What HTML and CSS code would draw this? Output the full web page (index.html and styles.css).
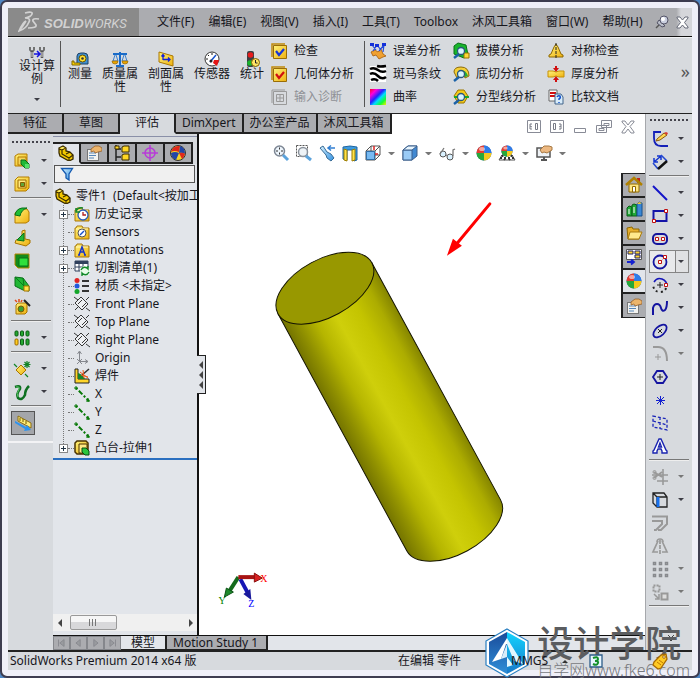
FILE: index.html
```html
<!DOCTYPE html>
<html lang="zh-CN">
<head>
<meta charset="utf-8">
<meta name="viewport" content="width=device-width, initial-scale=1">
<title>SolidWorks Premium 2014</title>
<link rel="stylesheet" href="styles.css">
</head>
<body>
<svg class="defs" aria-hidden="true">
  <defs>
    <linearGradient id="gold" x1="0" y1="0" x2="1" y2="1"><stop offset="0" stop-color="#fff27a"/><stop offset="1" stop-color="#eeb010"/></linearGradient>
    <linearGradient id="sheen" x1="0" y1="0" x2="1" y2="1"><stop offset="0" stop-color="#d6f1ff"/><stop offset="1" stop-color="#2f8fe0"/></linearGradient>
    <linearGradient id="rainbow" x1="0" y1="0" x2="1" y2="1"><stop offset="0" stop-color="#f02"/><stop offset=".22" stop-color="#f0d"/><stop offset=".45" stop-color="#22f"/><stop offset=".6" stop-color="#0df"/><stop offset=".8" stop-color="#1f3"/><stop offset="1" stop-color="#fe0"/></linearGradient>
    <linearGradient id="body" x1="0" x2="1"><stop offset="0" stop-color="#747400"/><stop offset=".12" stop-color="#8f8f00"/><stop offset=".28" stop-color="#b5b500"/><stop offset=".47" stop-color="#cfcf0b"/><stop offset=".68" stop-color="#c4c400"/><stop offset=".86" stop-color="#acac00"/><stop offset="1" stop-color="#858500"/></linearGradient>
    <linearGradient id="hexl" x1="0" y1="0" x2="0" y2="1"><stop offset="0" stop-color="#1a4c9a"/><stop offset="1" stop-color="#2f8fd8"/></linearGradient>
    <linearGradient id="hexr" x1="0" y1="0" x2="0" y2="1"><stop offset="0" stop-color="#12d4ff"/><stop offset="1" stop-color="#1878c8"/></linearGradient>
    <symbol id="folder" viewBox="0 0 16 16"><path d="M1 4h1l1-2h5l1 2h6v11H1z" fill="url(#gold)" stroke="#a87808"/><path d="M2 5h12" stroke="#fff8c0"/></symbol>
    <symbol id="plane" viewBox="0 0 16 16"><path d="M7 1l7 7-6 6-7-7z" fill="#eef0f3" stroke="#222" stroke-width=".9"/><path d="M0 1l4 3M12 12l4 3M4 8l4-4M8 11l4-4M1 14l3-3M12 4l3-3" fill="none" stroke="#222" stroke-width=".9"/></symbol>
    <symbol id="axis" viewBox="0 0 16 16"><path d="M2 2l13 13" stroke="#067806" stroke-width="2" stroke-dasharray="2 2 5 2"/><path d="M0 2h4M2 0v4M12 15h4M14 12v4" stroke="#067806"/></symbol>
    <symbol id="part" viewBox="0 0 16 16"><path d="M1 3l4-2 3 2v3l4 1 3 3v4l-4 2-9-5-1-3z" fill="#f2c800" stroke="#3a2c00" stroke-width="1.3"/><path d="M1 4l3 1 3-2M4 5v4l7 4 4-3M11 13v3M8 9l4-2" fill="none" stroke="#3a2c00" stroke-width="1.2"/><path d="M2 3l3-1 2 1-3 1z" fill="#fff27a"/></symbol>
    <symbol id="ball" viewBox="0 0 16 16"><circle cx="8" cy="8" r="7.5" fill="#36a"/><path d="M8 8V.5A7.5 7.5 0 0 0 .5 8z" fill="#e63c30"/><path d="M8 8V.5A7.5 7.5 0 0 1 15.5 8z" fill="#2f7be8"/><path d="M8 8H.5A7.5 7.5 0 0 0 8 15.5z" fill="#28a83a"/><path d="M8 8h7.5A7.5 7.5 0 0 1 8 15.5z" fill="#f4c81c"/><ellipse cx="6" cy="4" rx="3" ry="2" fill="#fff" opacity=".55"/></symbol>
    <symbol id="lens" viewBox="0 0 16 16"><path d="M6 11l-5 4" stroke="#1b62a8" stroke-width="2.5"/><circle cx="8" cy="8" r="3.5" fill="#d8f4ff" stroke="#28577c" stroke-width="1.3"/></symbol>
    <symbol id="hand" viewBox="0 0 16 16"><rect x="1.5" y="4.5" width="11" height="11" fill="#f3f3f0" stroke="#777"/><path d="M3 8h7M3 10.5h7M3 13h5" stroke="#5686b8"/><path d="M5 4l4-3h4l3 2v3l-4 1-3 1-1-2-3 1z" fill="#edb56b" stroke="#95602a" stroke-width=".8"/></symbol>
  </defs>
</svg>

<div class="window">
  <header class="menubar">
    <div class="brand">
      <svg width="22" height="22" viewBox="0 0 22 22" aria-hidden="true"><path d="M7 2q8-2 7 1-1 3-7 4 6 0 4 4-3 7-10 9Q5 11 8 10M8 10q-3 5-7 10M21 8q-7-1-6 2l3 4q1 3-8 3" fill="none" stroke="#d2d2d2" stroke-width="1.7"/></svg>
      <span class="brand-name"><b>SOLID</b><span>WORKS</span></span>
    </div>
    <nav class="menus" aria-label="主菜单">
      <button>文件(F)</button><button>编辑(E)</button><button>视图(V)</button><button>插入(I)</button><button>工具(T)</button><button>Toolbox</button><button>沐风工具箱</button><button>窗口(W)</button><button>帮助(H)</button>
    </nav>
    <button class="pin" aria-label="固定菜单"><svg width="14" height="14" viewBox="0 0 14 14"><path d="M5 9l-4 4" stroke="#555" stroke-width="1.5"/><path d="M4 5l6 6-3 1-5-4z" fill="#b8bcc8" stroke="#555568"/><circle cx="9" cy="5" r="4" fill="#c9cede" stroke="#555568"/><circle cx="8" cy="4" r="2" fill="#fff"/></svg></button>
    <button class="close" aria-label="关闭"><svg width="13" height="13" viewBox="0 0 13 13"><path d="M1 1h3l2.5 3L9 1h3v1L8.500 6.500 12 11v1H9L6.500 9 4 12H1v-1l3.500-4.500L1 2z" fill="#fff" stroke="#666a78"/></svg></button>
  </header>

  <section class="ribbon" aria-label="评估">
    <button class="tool study">
      <svg width="16" height="12" viewBox="0 0 16 12"><path d="M1 1v3l2 2 2-2V1M11 1v3l2 2 2-2V1" fill="none" stroke="#666" stroke-width="1.8"/><path d="M3 5v7M13 5v7" stroke="#555" stroke-width="2.500"/><path d="M3 6v5M13 6v5" stroke="#ddd"/><path d="M5 8h5M8 5l3 3-3 3" fill="none" stroke="#1212e0" stroke-width="1.500"/></svg>
      <span>设计算例</span><i class="dd"></i>
    </button>
    <i class="vsep"></i>
    <div class="tools">
      <button class="tool two"><svg class="ico" viewBox="0 0 16 16"><path d="M5 12V5q0-3 4-3h3q4 0 4 4v7H6z" fill="#3f8fd0" stroke="#1c4167"/><circle cx="10.500" cy="7.500" r="3.500" fill="#ffe030" stroke="#665100"/><circle cx="10.500" cy="7.500" r="1.300" fill="#333"/><path d="M0 14v-4h2v2h6v2z" fill="#ffd800" stroke="#806400"/></svg><span>测量</span></button>
      <button class="tool"><svg class="ico" viewBox="0 0 16 16"><path d="M8 1v13M1 3h14M4 15h8" stroke="#1a6bc8" stroke-width="2"/><path d="M3 4l-2 6h5L4 4M12 4l-2 6h5l-2-6" fill="none" stroke="#3b82d0"/><path d="M0 10h6q0 3-3 3t-3-3zM10 10h6q0 3-3 3t-3-3z" fill="#eba600" stroke="#95670a" stroke-width=".7"/></svg><span>质量属性</span></button>
      <button class="tool"><svg class="ico" viewBox="0 0 16 16"><path d="M1 1l14 4v10L1 11z" fill="url(#gold)" stroke="#aa7600"/><path d="M5 9V4M3.500 5.500L5 3.500l1.500 2M5 8.500h7M10 6.500l2 2-2 2" fill="none" stroke="#1522d8" stroke-width="1.300"/></svg><span>剖面属性</span></button>
      <button class="tool"><svg class="ico" viewBox="0 0 16 16"><circle cx="8" cy="8" r="7" fill="#fff" stroke="#333"/><path d="M8 2v2M2 8h2M4 4l1 1M12 4l-1 1" stroke="#222"/><path d="M6 11l6-7" stroke="#1551cd" stroke-width="1.500"/><path d="M10 9h5l-2 6-4-3z" fill="#e51313"/><circle cx="7" cy="10" r="1.500" fill="#222"/></svg><span>传感器</span></button>
      <button class="tool two"><svg class="ico" viewBox="0 0 16 16"><rect x="3" y="0" width="7" height="16" rx="2" fill="#3c4044"/><circle cx="6.500" cy="4" r="2.800" fill="#e81c1c"/><circle cx="6" cy="12" r="2.800" fill="#18b52b"/><circle cx="11.500" cy="11.500" r="4" fill="#ffe566" stroke="#7c6000"/><path d="M11.500 9v3h2" fill="none" stroke="#222"/></svg><span>统计</span></button>
    </div>
    <div class="list checks">
      <button><svg class="ico" viewBox="0 0 16 16"><path d="M1 14V1h13" fill="none" stroke="#c18a08" stroke-width="1.500"/><path d="M2.500 2.500h13v13h-13z" fill="url(#gold)" stroke="#9a6d06"/><path d="M5 8l3 4 5-6" fill="none" stroke="#1535d8" stroke-width="2.200"/></svg>检查</button>
      <button><svg class="ico" viewBox="0 0 16 16"><path d="M1 14V1h13" fill="none" stroke="#c18a08" stroke-width="1.500"/><path d="M2.500 2.500h13v13h-13z" fill="url(#gold)" stroke="#9a6d06"/><path d="M5 8l3 4 5-6" fill="none" stroke="#d01010" stroke-width="2.200"/></svg>几何体分析</button>
      <button disabled><svg class="ico" viewBox="0 0 16 16"><path d="M1 14V1h13M2.500 2.500h13v13h-13zM5.500 5.500h7v7h-7zM9 6v6M6 9h6" fill="none" stroke="#999"/></svg>输入诊断</button>
    </div>
    <i class="vsep"></i>
    <div class="list deviation">
      <button><svg class="ico" viewBox="0 0 16 16"><path d="M1 9l4-2 3 2 3-3 2 5 3 2-3 1-4 2-3-4-3 1z" fill="#f0a030" stroke="#a45c08" stroke-width=".8"/><path d="M2 2l4 5M7 2L3 8M7 2l4 5M14 2L9 8M14 2l-1 7" fill="none" stroke="#2448dc" stroke-width="1.200"/><path d="M0 0h4v3H0zM5 1h4v3H5zM12 0h4v3h-4z" fill="#1430d8"/></svg>误差分析</button>
      <button><svg class="ico" viewBox="0 0 16 16"><path fill="#fff" d="M0 0h16v16H0z"/><path d="M0 3q4-2 8 1t8 1M0 8q4-2 8 2t8 1M1 14q4-2 7 1M7 0q3 1 9 0" fill="none" stroke="#000" stroke-width="2.500"/></svg>斑马条纹</button>
      <button><svg class="ico" viewBox="0 0 16 16"><path fill="url(#rainbow)" d="M0 0h16v16H0z"/></svg>曲率</button>
    </div>
    <div class="list draft">
      <button><svg class="ico" viewBox="0 0 16 16"><path d="M1 3l4-3 8 2 2 10-4 3L1 11z" fill="#18b52c" stroke="#087018"/><path d="M11 10h5v5h-5z" fill="#ffd83a" stroke="#9a7600"/><use href="#lens"/></svg>拔模分析</button>
      <button><svg class="ico" viewBox="0 0 16 16"><path d="M1 6q0-5 7-5 8 0 8 9l-4 2Q11 6 7 7L4 12z" fill="#f5cf35" stroke="#8c6b0b"/><path d="M6 4q7-1 9 6l-3 1q-1-5-6-4z" fill="#25ae36"/><use href="#lens"/></svg>底切分析</button>
      <button><svg class="ico" viewBox="0 0 16 16"><path d="M5 1h6l4 6-4 7H5L1 7z" fill="#f7ca17" stroke="#9a7600"/><path d="M1 8h15" stroke="#18a82a" stroke-width="2"/><use href="#lens"/></svg>分型线分析</button>
    </div>
    <div class="list">
      <button><svg class="ico" viewBox="0 0 16 16"><path d="M8 1l2 3 3 7 2 1v2H1v-2l2-1 3-7z" fill="url(#gold)" stroke="#8f6800"/><path d="M8 0v16" stroke="#222" stroke-dasharray="3 1"/></svg>对称检查</button>
      <button><svg class="ico" viewBox="0 0 16 16"><path d="M0 5h5q3 2 6 0h5v6h-5q-3-2-6 0H0z" fill="url(#gold)" stroke="#c79005"/><path d="M8 0v3M8 16v-3" stroke="#d01010" stroke-width="2"/><path d="M5 2h6L8 6zM5 14h6l-3-4z" fill="#d01010"/></svg>厚度分析</button>
      <button><svg class="ico" viewBox="0 0 16 16"><path d="M1 1h8v11H1z" fill="#fff" stroke="#666"/><path d="M2 4h6M2 7h6" stroke="#d01010" stroke-width="2"/><path d="M7 5h6l2 3v7H7z" fill="#d8ecfa" stroke="#42658a"/><path d="M9 8q1-2 3-1 1 2-1 3v1M11 13v1" fill="none" stroke="#1452ce" stroke-width="1.500"/></svg>比较文档</button>
    </div>
    <button class="more" aria-label="更多">»</button>
  </section>

  <main class="workspace">
    <div class="document">
      <div class="tabrow">
        <div class="tabs" role="tablist">
          <button role="tab">特征</button><button role="tab">草图</button><button role="tab" aria-selected="true">评估</button><button role="tab" class="fit">DimXpert</button><button role="tab" class="fit">办公室产品</button><button role="tab" class="fit">沐风工具箱</button>
        </div>
        <div class="doc-controls">
          <button aria-label="向左展开"><svg width="14" height="14" viewBox="0 0 14 14"><path d="M.5.5h13v12h-13z" fill="#fff" stroke="#888b96"/><path d="M5 4H3v5h2M3 6l2 1M8.500 3.500h2v6h-2z" fill="none" stroke="#777a85"/></svg></button>
          <button aria-label="向右展开"><svg width="14" height="14" viewBox="0 0 14 14"><path d="M.5.5h13v12h-13z" fill="#fff" stroke="#888b96"/><path d="M9 4h2v5H9M11 6l-2 1M3.500 3.500h2v6h-2z" fill="none" stroke="#777a85"/></svg></button>
          <button aria-label="最小化"><svg width="14" height="14" viewBox="0 0 14 14"><path d="M1.500 8.500h11v4h-11z" fill="#fff" stroke="#888b96"/></svg></button>
          <button aria-label="还原"><svg width="16" height="14" viewBox="0 0 16 14"><path d="M5.500.5h10v7h-10zM8 3.500h5v2H8zM.5 5.500h10v7H.5zM3 8.500h5v2H3z" fill="#fff" stroke="#888b96"/></svg></button>
          <button aria-label="关闭文档"><svg width="14" height="14" viewBox="0 0 14 14"><path d="M1 1h3l3 4 3-4h3v1L9 6.500 13 12v1h-3L7 9l-3 4H1v-1l4-5.500L1 2z" fill="#fff" stroke="#888b96"/></svg></button>
        </div>
      </div>

      <div class="docbody">
        <aside class="toolbar features" aria-label="特征工具栏">
          <i class="grip"></i>
          <div class="trow"><button aria-label="拉伸凸台"><svg class="ico" viewBox="0 0 16 16"><path d="M1 3l3-2h9v9l-3 3H1z" fill="url(#gold)" stroke="#b47c00"/><path d="M4 4h8v8H4z" fill="#f5d45a" stroke="#b47c00"/><path d="M7 7h4l4 4v4h-4L7 11z" fill="#20b835" stroke="#0c6a18"/><path d="M11 11h4v4h-4z" fill="#54e068"/></svg></button><i class="dd"></i></div>
          <div class="trow"><button aria-label="拉伸切除"><svg class="ico" viewBox="0 0 16 16"><path d="M1 4l3-3h11v11l-3 3H1z" fill="url(#gold)" stroke="#b47c00"/><path d="M4 4h8v8H4z" fill="#ffe983" stroke="#a26f00"/><path d="M6.500 6.500h4v4h-4z" fill="#62a43a" stroke="#865c00"/></svg></button><i class="dd"></i></div>
          <i class="hsep"></i>
          <div class="trow"><button aria-label="圆角"><svg class="ico" viewBox="0 0 16 16"><path d="M1 6l5-4h7l2 3v9l-3 2H1z" fill="url(#gold)" stroke="#b47c00"/><path d="M1 8q1-6 7-7h5Q7 3 6 9z" fill="#1fbe34" stroke="#087018"/></svg></button><i class="dd"></i></div>
          <div class="trow"><button aria-label="筋"><svg class="ico" viewBox="0 0 16 16"><path d="M8 1l3-1v9l5 1v3l-4 3-11-3 1-3 6-2z" fill="url(#gold)" stroke="#a87500"/><path d="M3 10l7-7v8z" fill="#23b838" stroke="#087018"/></svg></button></div>
          <div class="trow"><button aria-label="抽壳"><svg class="ico" viewBox="0 0 16 16"><path d="M1 1h14v14H4l-3-3z" fill="#148b1c" stroke="#b48800"/><path d="M5 5h9v8H5z" fill="#2fe03c" stroke="#087018"/></svg></button></div>
          <div class="trow"><button aria-label="拔模"><svg class="ico" viewBox="0 0 16 16"><path d="M1 1l8 1 6 8v5l-6-1-8-4z" fill="#21b735" stroke="#087018"/><path d="M1 1l9 9M9 2l1 8" stroke="#0a7a1c"/><path d="M10 10h5v5h-5z" fill="#ffe24a" stroke="#a87500"/></svg></button></div>
          <div class="trow"><button aria-label="异型孔向导"><svg class="ico" viewBox="0 0 16 16"><path d="M2 6l2-2h9v9l-2 2H2z" fill="url(#gold)" stroke="#a87500"/><circle cx="7" cy="10" r="3" fill="#3aa038" stroke="#805900"/><path d="M10 1l6 6" stroke="#222" stroke-width="2"/><path d="M1 1l2 2M5 0v3M8 1l-1 2" stroke="#e04b1a" stroke-width="1.500"/></svg></button></div>
          <i class="hsep"></i>
          <div class="trow"><button aria-label="阵列"><svg class="ico" viewBox="0 0 16 16"><g fill="#26a832" stroke="#0a5d12"><rect x="1" y="1" width="3" height="5" rx="1"/><rect x="6.500" y="1" width="3" height="5" rx="1"/><rect x="12" y="1" width="3" height="5" rx="1"/><rect x="6.500" y="9" width="3" height="6" rx="1"/><rect x="12" y="9" width="3" height="6" rx="1"/></g><rect x="1" y="9" width="3" height="6" rx="1" fill="#ffcd22" stroke="#9c6a00"/></svg></button><i class="dd"></i></div>
          <i class="hsep"></i>
          <div class="trow"><button aria-label="参考几何体"><svg class="ico" viewBox="0 0 16 16"><path d="M7 4l5 5-5 5-5-5z" fill="url(#gold)" stroke="#a87500"/><path d="M0 3l3 3M11 13l3 3M13 0v7M9.500 3.500h7M10.500 1l5 5M15.500 1l-5 5" stroke="#128426" stroke-width="1.200"/></svg></button><i class="dd"></i></div>
          <div class="trow"><button aria-label="曲线"><svg class="ico" viewBox="0 0 16 16"><path d="M1 3q6-2 5 2-4 5-2 9 4 3 7-3 0-5 4-9" fill="none" stroke="#0d7020" stroke-width="2.500"/><path d="M2 3q4-1 3 2-3 5-1 8" fill="none" stroke="#56c463"/></svg></button><i class="dd"></i></div>
          <i class="hsep"></i>
          <div class="trow"><button class="pressed" aria-label="Instant3D" aria-pressed="true"><svg class="ico" viewBox="0 0 16 16"><path d="M3 1l13 7v5L3 6z" fill="#ffec78" stroke="#8c6f14"/><path d="M5 3v3M8 4v3M11 6v3" stroke="#705a00"/><path d="M0 6l11 6 1-2 4 5-7 1 1-2L0 8z" fill="#2b93ef"/></svg></button></div>
          <i class="endline"></i>
        </aside>

        <div class="stage">
          <div class="panes">
            <section class="manager" aria-label="设计树">
              <div class="mtabs" role="tablist">
                <button role="tab" aria-selected="true" aria-label="FeatureManager"><svg class="ico"><use href="#part"/></svg></button>
                <button role="tab" aria-label="PropertyManager"><svg class="ico"><use href="#hand"/></svg></button>
                <button role="tab" aria-label="ConfigurationManager"><svg class="ico" viewBox="0 0 16 16"><path d="M2 0v16M2 4h5M2 12h5" fill="none" stroke="#222" stroke-width="1.500"/><path d="M1 1h4v3H1zM8 2l2-1h5v6H8zM8 10l2-1h5v6H8z" fill="#ffd724" stroke="#3a2c00"/></svg></button>
                <button role="tab" aria-label="DimXpertManager"><svg class="ico" viewBox="0 0 16 16"><circle cx="8" cy="8" r="5" fill="none" stroke="#b83bd8" stroke-width="1.500"/><path d="M8 0v16M0 8h16" stroke="#b83bd8" stroke-width="1.500"/></svg></button>
                <button role="tab" aria-label="DisplayManager"><svg class="ico" viewBox="0 0 16 16"><circle cx="8" cy="8" r="7.500" fill="#f5d52a" stroke="#333"/><path d="M1 7q2-7 9-6l-1 6q-5-2-8 0z" fill="#e0281c"/><path d="M10 1q5 1 5 8-3-2-6-1zM1 8q4-2 8 0l-3 7q-5-2-5-7z" fill="#2346a8"/><path d="M9 8q4-1 6 1-1 3-3 5z" fill="#e0281c"/></svg></button>
              </div>
              <label class="filter"><svg class="ico" viewBox="0 0 16 16"><path d="M2.500 2.500h11L10 8v6l-3-2V8z" fill="url(#sheen)" stroke="#1459b0" stroke-width="1.300"/></svg><input type="text" aria-label="过滤设计树"></label>
              <div class="tree">
                <div class="root"><svg class="ico"><use href="#part"/></svg><span>零件1&nbsp; (Default&lt;按加工&gt;)</span></div>
                <ul>
                  <li><button class="plus" aria-label="展开"></button><i class="twig"></i><svg class="ico" viewBox="0 0 16 16"><use href="#folder"/><circle cx="9" cy="9" r="5" fill="#fff" stroke="#285bb8" stroke-width="1.300"/><path d="M9 6v3h3" fill="none" stroke="#b02020" stroke-width="1.300"/><path d="M2 5q2-4 7-3M2 2v4h4" fill="none" stroke="#17872a" stroke-width="1.500"/></svg>历史记录</li>
                  <li><i class="gap"></i><i class="twig"></i><svg class="ico" viewBox="0 0 16 16"><use href="#folder"/><circle cx="8" cy="9" r="4" fill="#fff" stroke="#555"/><path d="M6 11l4-4" stroke="#1551cd" stroke-width="1.500"/></svg>Sensors</li>
                  <li><button class="plus" aria-label="展开"></button><i class="twig"></i><svg class="ico" viewBox="0 0 16 16"><use href="#folder"/><path d="M5 13l3-8 3 8M6 10h4M4 13h2M10 13h2" fill="none" stroke="#1733c8" stroke-width="1.500"/></svg>Annotations</li>
                  <li><button class="plus" aria-label="展开"></button><i class="twig"></i><svg class="ico" viewBox="0 0 16 16"><path d="M1 1h13v10H1z" fill="#fff" stroke="#30405c"/><path d="M1 2.500h13" stroke="#30405c" stroke-width="3"/><path d="M1 7h13M5 3v8M9 3v8" stroke="#30405c"/><circle cx="11" cy="11" r="5" fill="#eafdea"/><path d="M7 10q2-4 6-2l1 1V6M15 12q-2 4-6 2l-1-1v3" fill="none" stroke="#128829" stroke-width="1.400"/></svg>切割清单(1)</li>
                  <li><i class="gap"></i><i class="twig"></i><svg class="ico" viewBox="0 0 16 16"><circle cx="3" cy="2.500" r="2.500" fill="#e02424"/><circle cx="3" cy="8" r="2.500" fill="#2459dc"/><circle cx="3" cy="13.500" r="2.500" fill="#14a62b"/><path d="M8 3h7M8 8h7M8 13h7" stroke="#333" stroke-width="2"/></svg>材质 &lt;未指定&gt;</li>
                  <li><i class="gap"></i><i class="twig"></i><svg class="ico"><use href="#plane"/></svg>Front Plane</li>
                  <li><i class="gap"></i><i class="twig"></i><svg class="ico"><use href="#plane"/></svg>Top Plane</li>
                  <li><i class="gap"></i><i class="twig"></i><svg class="ico"><use href="#plane"/></svg>Right Plane</li>
                  <li><i class="gap"></i><i class="twig"></i><svg class="ico" viewBox="0 0 16 16"><path d="M5.500 12V2M3.500 4l2-3 2 3M5 11.500h9M11 9.500l3 2-3 2M3 9l5 5M3 14l5-5" fill="none" stroke="#85888e"/></svg>Origin</li>
                  <li><i class="gap"></i><i class="twig"></i><svg class="ico" viewBox="0 0 16 16"><path d="M1 1h3v10h11v4H1z" fill="#ffd52b" stroke="#222"/><path d="M4 11V5q4 1 7 6z" fill="#16852a"/><path d="M15 1L8 7" stroke="#333" stroke-width="1.600"/><path d="M7 7l7 2M9 2l1 8M6 4l8 6" stroke="#ef5818"/></svg>焊件</li>
                  <li><i class="gap"></i><i class="twig"></i><svg class="ico"><use href="#axis"/></svg>X</li>
                  <li><i class="gap"></i><i class="twig"></i><svg class="ico"><use href="#axis"/></svg>Y</li>
                  <li><i class="gap"></i><i class="twig"></i><svg class="ico"><use href="#axis"/></svg>Z</li>
                  <li><button class="plus" aria-label="展开"></button><i class="twig"></i><svg class="ico" viewBox="0 0 16 16"><path d="M1 3l2-2h9l2 2v9l-2 2H3l-2-2z" fill="url(#gold)" stroke="#4a3300" stroke-width="1.500"/><path d="M5 4h8v9H5z" fill="#ffe983" stroke="#4a3300"/><path d="M8 8h4l3 3v4h-4l-3-3z" fill="#2bc53d" stroke="#084a12"/></svg>凸台-拉伸1</li>
                </ul>
              </div>
              <div class="scrollbar" aria-hidden="true"><i class="tri left"></i><i class="thumb"></i><i class="tri right"></i></div>
              <button class="splitter" aria-label="折叠面板"><i class="tri left"></i><i class="tri left"></i><i class="tri left"></i></button>
            </section>

            <section class="viewport" aria-label="图形区域">
              <svg class="model" viewBox="199 134 446 502" aria-label="圆柱体">
                <g transform="translate(324.700 288.500) rotate(-28.500)" stroke="#151500" stroke-width="1">
                  <path d="M-53.500 0V270.400A53.500 28.900 0 0 0 53.500 270.400V0z" fill="url(#body)"/>
                  <ellipse rx="53.500" ry="28.900" fill="#989800"/>
                </g>
                <path d="M490 204l-34 41" stroke="#f00" stroke-width="3" stroke-linecap="round"/><path d="M447 256l6-17 9 7z" fill="#f00"/>
                <path d="M238 578l-9 14" stroke="#146a1c" stroke-width="4"/><path d="M224 598l2-9 7 4z" fill="#1e8a2c" stroke="#0d5216"/>
                <path d="M240 580l7 13" stroke="#1616b4" stroke-width="4"/><path d="M251 601l-8-6 7-5z" fill="#1a1a9c"/>
                <path d="M238 578h17" stroke="#a81414" stroke-width="4"/><path d="M254 574l8 5-8 4z" fill="#d82020" stroke="#8c1010"/>
                <g class="axes"><text x="260" y="583" fill="#f00">X</text><text x="218" y="605" fill="#008000">Y</text><text x="248" y="608" fill="#00f">Z</text></g>
              </svg>
              <div class="viewtools">
                <button aria-label="整屏显示"><svg class="ico" viewBox="0 0 16 16"><circle cx="6.500" cy="6" r="5" fill="#edf5fc" stroke="#7e8794" stroke-width="1.500"/><path d="M6.500 2.500v7M3 6h7" stroke="#333" stroke-dasharray="2 3"/><path d="M10 10l5 5" stroke="#5ca3dc" stroke-width="3"/></svg></button>
                <button aria-label="局部放大"><svg class="ico" viewBox="0 0 16 16"><path d="M.5.5h11v11H.5z" fill="none" stroke="#555" stroke-dasharray="2 1"/><circle cx="7" cy="7" r="4.500" fill="#eef3f7" stroke="#8a929c" stroke-width="1.500"/><path d="M10 11l5 4" stroke="#5ca3dc" stroke-width="3"/></svg></button>
                <button aria-label="上一视图"><svg class="ico" viewBox="0 0 16 16"><path d="M1 3l3-2 4 6 4 2 3 4-3 3-4-3-1-3z" fill="url(#sheen)" stroke="#396c96"/><path d="M9 3h7M12 .5L9 3l3 2.500" fill="none" stroke="#327fd2" stroke-width="1.500"/></svg></button>
                <button aria-label="剖面视图"><svg class="ico" viewBox="0 0 16 16"><path d="M1 2l7-1 7 1v13l-3 1V5H5v10l-4-1z" fill="#3d9be0" stroke="#2065a0"/><path d="M2 4v11l3 1V5zM10 5v11l3-1V4z" fill="#ffe34a" stroke="#9c7d00"/></svg></button>
                <button aria-label="视图定向"><svg class="ico" viewBox="0 0 16 16"><path d="M1 6l5-5h9v9l-5 5H1z" fill="#fff" stroke="#555"/><path d="M1 6h9v9M15 1l-5 5M6 1v9h9" fill="none" stroke="#555"/><path d="M1.500 6.500h8v8h-8z" fill="#78baf2" stroke="#316fa8"/><path d="M9 1v4M13 9h-3" stroke="#e02424" stroke-width="1.500"/></svg></button><i class="dd"></i>
                <button aria-label="显示样式"><svg class="ico" viewBox="0 0 16 16"><path d="M1 5l5-4h9v10l-5 4H1z" fill="#4189d2" stroke="#3b5f8c"/><path d="M1 5h9v10H1z" fill="#9acbf6" stroke="#3b5f8c"/><path d="M1 5l5-4h9l-5 4z" fill="#e8f6ff" stroke="#3b5f8c"/></svg></button><i class="dd"></i>
                <button aria-label="隐藏/显示项目"><svg class="ico" viewBox="0 0 16 16"><circle cx="4" cy="9" r="3" fill="#d9f1ff" stroke="#555"/><circle cx="11" cy="12" r="3" fill="#d9f1ff" stroke="#555"/><path d="M1 9l4-6M7 10l2 1M14 11V5l2-1" fill="none" stroke="#777" stroke-width="1.300"/></svg></button><i class="dd"></i>
                <button aria-label="编辑外观"><svg class="ico"><use href="#ball"/></svg></button>
                <button aria-label="应用布景"><svg class="ico" viewBox="0 0 16 16"><path d="M0 15l3-5h10l3 5z" fill="#fff" stroke="#555"/><path d="M3 10l3 5M13 10l-3 5M1 13h14" stroke="#333" stroke-width="2" stroke-dasharray="2 2"/><svg x="2" y="0" width="12" height="12"><use href="#ball"/></svg></svg></button><i class="dd"></i>
                <button aria-label="视图设定"><svg class="ico" viewBox="0 0 16 16"><path d="M1 3h13v9H1z" fill="#eef2f6" stroke="#555" stroke-width="1.500"/><path d="M5 15h6M8 12v3" stroke="#555" stroke-width="2"/><path d="M4 5l4-4h5l3 1v3l-5 3-3-1-2 1z" fill="#edb982" stroke="#a67843"/></svg></button><i class="dd"></i>
              </div>
              <div class="taskpane">
                <button aria-label="资源"><svg class="ico" viewBox="0 0 16 16"><path d="M11 1h3v5h-3z" fill="#c22418"/><path d="M3 7h10v8H3z" fill="#ffe580" stroke="#8f6800"/><path d="M0 8l8-7 8 7" fill="none" stroke="#b08100" stroke-width="2.500"/><path d="M6.500 9.500h3V15h-3z" fill="#fff" stroke="#8f6800"/></svg></button>
                <button aria-label="设计库"><svg class="ico" viewBox="0 0 16 16"><path d="M1 7l2-2 3 1v9H1z" fill="#21aa36" stroke="#0a5c18"/><path d="M6 4l2-1 3 1v11H6z" fill="#21aa36" stroke="#0a5c18"/><path d="M11 3l2-2 3 1v13h-5z" fill="#3a87d6" stroke="#164e8a"/><path d="M11 3l2-2 3 1-2 1z" fill="#f3c83a"/><path d="M3 8v5M8 6v6" stroke="#fff"/></svg></button>
                <button aria-label="文件探索器"><svg class="ico" viewBox="0 0 16 16"><path d="M1 3l5-1 1 2h6v10H2z" fill="#e7ae2a" stroke="#8f6800"/><path d="M4 7h12l-3 7H2z" fill="#ffe98c" stroke="#a97a0e"/></svg></button>
                <button aria-label="视图调色板"><svg class="ico" viewBox="0 0 16 16"><path d="M.5.5h15v10H.5z" fill="#fff" stroke="#555"/><path d="M2 2h5v3H2zM9 2h5v3H9zM9 6h5v3H9z" fill="#ffd630" stroke="#226"/><path d="M1 13h6M5 10.500L8 13l-3 2.500" fill="none" stroke="#1420d0" stroke-width="1.800"/></svg></button>
                <button class="on" aria-label="外观"><svg class="ico"><use href="#ball"/></svg></button>
                <button aria-label="自定义属性"><svg class="ico"><use href="#hand"/></svg></button>
              </div>
            </section>
          </div>
          <div class="sheets">
            <button class="nav" aria-label="第一个"><svg viewBox="0 0 16 14"><path d="M4.500 3v8M11 3v8L6 7z" stroke="#85878c" fill="#999b9f"/></svg></button><button class="nav" aria-label="上一个"><svg viewBox="0 0 16 14"><path d="M10 3v8L5 7z" stroke="#85878c" fill="#999b9f"/></svg></button><button class="nav" aria-label="下一个"><svg viewBox="0 0 16 14"><path d="M6 3v8l5-4z" stroke="#85878c" fill="#999b9f"/></svg></button><button class="nav" aria-label="最后一个"><svg viewBox="0 0 16 14"><path d="M11.500 3v8M5 3v8l5-4z" stroke="#85878c" fill="#999b9f"/></svg></button>
            <button class="sheet current">模型</button><button class="sheet motion">Motion Study 1</button>
          </div>
        </div>
      </div>
    </div>

    <aside class="toolbar sketch" aria-label="草图工具栏">
      <i class="grip"></i>
      <div class="trow"><button aria-label="草图绘制"><svg class="ico" viewBox="0 0 16 16"><path d="M9 1H2v6q0 8 7 8h7" fill="none" stroke="#1420b8" stroke-width="1.800"/><path d="M5 8l7-6 3 2-7 5-4 1z" fill="#ffd750" stroke="#8a5a10"/><path d="M12 2l3 2 1-2-2-1z" fill="#d83a30"/></svg></button><i class="dd"></i></div>
      <div class="trow"><button aria-label="智能尺寸"><svg class="ico" viewBox="0 0 16 16"><path d="M2 8l7-6M2 4v4h4M5 2h4v4" fill="none" stroke="#1436d0" stroke-width="1.500"/><path d="M1 9l5 6M9 1l6 6" stroke="#2448d0" stroke-width="1.500"/><path d="M6 15l9-8" stroke="#111" stroke-width="2.500"/></svg></button><i class="dd"></i></div>
      <i class="hsep"></i>
      <div class="trow"><button aria-label="直线"><svg class="ico" viewBox="0 0 16 16"><path d="M1 1l14 14" stroke="#1414c8" stroke-width="2"/></svg></button><i class="dd"></i></div>
      <div class="trow"><button aria-label="矩形"><svg class="ico" viewBox="0 0 16 16"><path d="M1.500 3h13v10h-13z" fill="none" stroke="#1414a8" stroke-width="2"/><path d="M.5 11.500h3v3h-3zM12.500 1.500h3v3h-3z" fill="#fff" stroke="#c01010"/></svg></button><i class="dd"></i></div>
      <div class="trow"><button aria-label="槽口"><svg class="ico" viewBox="0 0 16 16"><rect x="1" y="3" width="14" height="10" rx="4" fill="none" stroke="#14149c" stroke-width="2"/><path d="M3.500 6.500h3v3h-3zM9.500 6.500h3v3h-3z" fill="#fff" stroke="#c01010"/></svg></button><i class="dd"></i></div>
      <div class="trow raised"><button aria-label="圆"><svg class="ico" viewBox="0 0 16 16"><circle cx="8" cy="8" r="6.500" fill="none" stroke="#1414a0" stroke-width="1.800"/><path d="M8 8l4-4" stroke="#c01010" stroke-dasharray="1 1"/><path d="M6.500 6.500h3v3h-3zM11.500 1.500h3v3h-3z" fill="#fff" stroke="#c01010"/></svg></button><i class="dd"></i></div>
      <div class="trow"><button aria-label="圆弧"><svg class="ico" viewBox="0 0 16 16"><path d="M2 5q3-5 8-3 5 2 5 7" fill="none" stroke="#1414b8" stroke-width="1.500"/><path d="M14 11q-1 4-6 4-6 0-7-7" fill="none" stroke="#222" stroke-width="2" stroke-dasharray="2 3"/><path d="M8 5v6M5 8h6" stroke="#222"/><path d="M12.500 6.500h3v3h-3z" fill="#fff" stroke="#c01010"/></svg></button><i class="dd"></i></div>
      <div class="trow"><button aria-label="样条曲线"><svg class="ico" viewBox="0 0 16 16"><path d="M1 15V8q1-4 4-4 3 0 4 4 1 4 4 2 2-2 2-9" fill="none" stroke="#1414a0" stroke-width="2"/></svg></button><i class="dd"></i></div>
      <div class="trow"><button aria-label="椭圆"><svg class="ico" viewBox="0 0 16 16"><ellipse cx="8" cy="8" rx="8" ry="4.500" transform="rotate(-42 8 8)" fill="none" stroke="#1414a0" stroke-width="1.800"/><path d="M6 6l4 4M10 6l-4 4" stroke="#222"/></svg></button><i class="dd"></i></div>
      <div class="trow off"><button disabled aria-label="圆角"><svg class="ico" viewBox="0 0 16 16"><path d="M1 1h5q9 0 9 14" fill="none" stroke="#999" stroke-width="2"/><path d="M6 8v6M3 11h6" stroke="#999"/></svg></button><i class="dd"></i></div>
      <div class="trow"><button aria-label="多边形"><svg class="ico" viewBox="0 0 16 16"><path d="M5 2h6l4 6-4 6H5L1 8z" fill="none" stroke="#1414a0" stroke-width="1.800"/><path d="M8 5v6M5 8h6" stroke="#222"/></svg></button></div>
      <div class="trow"><button aria-label="点"><svg class="ico" viewBox="0 0 16 16"><path d="M8.500 4v9M4 8.500h9M5 5l7 7M12 5l-7 7" stroke="#1420d0"/></svg></button></div>
      <div class="trow"><button aria-label="基准面"><svg class="ico" viewBox="0 0 16 16"><path d="M1 1l14 3v11L1 12zM1 6l14 4M8 2v12" fill="none" stroke="#1a24b8" stroke-width="1.300" stroke-dasharray="3 2"/></svg></button></div>
      <div class="trow"><button aria-label="文字"><svg class="ico" viewBox="0 0 16 16"><path d="M1 15v-2l1-1 5-11h2l5 11 1 1v2h-5v-2l-1-2H6l-1 2v2zM6.500 9h3L8 5z" fill="#fff" fill-rule="evenodd" stroke="#1a24b0" stroke-width="1.400"/></svg></button></div>
      <i class="hsep"></i>
      <div class="trow off"><button disabled aria-label="剪裁"><svg class="ico" viewBox="0 0 16 16"><path d="M0 6h16M5 12h11M11 0v16M2 3l8 5M2 9l8-6" stroke="#999" stroke-width="1.600"/><circle cx="2.500" cy="3" r="1.500" fill="none" stroke="#999"/><circle cx="2.500" cy="9" r="1.500" fill="none" stroke="#999"/></svg></button><i class="dd"></i></div>
      <div class="trow"><button aria-label="转换实体引用"><svg class="ico" viewBox="0 0 16 16"><path d="M1 1h11l3 4v10H5l-4-4zM1 1l4 4h10M5 5v10" fill="none" stroke="#222" stroke-width="1.300"/><path d="M6 5v10" stroke="#1670ee" stroke-width="3"/></svg></button><i class="dd"></i></div>
      <div class="trow off"><button disabled aria-label="等距实体"><svg class="ico" viewBox="0 0 16 16"><path d="M0 1.500h15V9l-6 6H6M0 6h10v3l-6 6H2" fill="none" stroke="#999" stroke-width="2"/></svg></button></div>
      <div class="trow off"><button disabled aria-label="镜向"><svg class="ico" viewBox="0 0 16 16"><path d="M6 3L1 14h5M10 3l5 11h-5M5 4q0-3 3-3t3 3" fill="none" stroke="#999" stroke-width="1.700"/><path d="M8 2v14" stroke="#999" stroke-width="1.700" stroke-dasharray="4 1"/></svg></button></div>
      <div class="trow off"><button disabled aria-label="线性阵列"><svg class="ico" viewBox="0 0 16 16"><path d="M1.500 1.500h2v2h-2zM7.500 1.500h2v2h-2zM13.500 1.500h2v2h-2zM1.500 7.500h2v2h-2zM7.500 7.500h2v2h-2zM13.500 7.500h2v2h-2zM1.500 13.500h2v2h-2zM7.500 13.500h2v2h-2zM13.500 13.500h2v2h-2z" fill="#ccc" stroke="#888a8e" stroke-width="1.500"/></svg></button><i class="dd"></i></div>
      <div class="trow off"><button disabled aria-label="移动实体"><svg class="ico" viewBox="0 0 16 16"><path d="M1.500 1.500h6v6h-6z" fill="none" stroke="#999" stroke-width="2" stroke-dasharray="2 1"/><path d="M2 10l5 5M7 10v5H3" fill="none" stroke="#999" stroke-width="1.500"/><path d="M9.500 9.500h6v6h-6z" fill="#ddd" stroke="#999" stroke-width="2"/></svg></button><i class="dd"></i></div>
      <i class="hsep"></i>
      <button class="overflow" aria-label="更多工具"><svg width="8" height="8" viewBox="0 0 8 8"><path d="M1 1l3 3 3-3M1 4l3 3 3-3" fill="none" stroke="#444"/></svg></button>
    </aside>
  </main>

  <footer class="statusbar">
    <span class="product">SolidWorks Premium 2014 x64 版</span>
    <span class="mode">在编辑 零件</span>
    <button class="units">MMGS<i class="up"></i></button>
    <button class="help" aria-label="帮助"><svg width="14" height="14" viewBox="0 0 14 14"><path d="M1 1h12v12H1z" fill="#e8f6ff" stroke="#2c5c88" stroke-width="1.300"/><path d="M4 4q5-2 5 1 0 2-3 2 4 0 3 2-1 3-5 1" fill="none" stroke="#13902a" stroke-width="2"/></svg></button>
    <button class="tag" aria-label="标签"><svg class="ico" viewBox="0 0 16 16"><path d="M2 9l7-7 5-1 1 5-6 9-3 1-5-4z" fill="#ffca24" stroke="#a86a00" stroke-width="1.300"/><circle cx="12" cy="4" r="1.300" fill="#fff" stroke="#a86a00"/><path d="M5 9l4 3M7 7l4 3" stroke="#bd7800"/></svg></button>
  </footer>

  <div class="watermark">
    <svg width="44" height="50" viewBox="0 0 44 50" aria-hidden="true"><path d="M22 1l21 12v24L22 49 1 37V13z" fill="#fff" stroke="#287ec0" stroke-width="1.200"/><path d="M22 4L4 14v22l18 10z" fill="url(#hexl)"/><path d="M22 4l18 10v22L22 46z" fill="url(#hexr)"/><path d="M22 10L7 34l9-3 5-15h1v-6z" fill="#fff"/><path d="M22 10l16 26-9-3-7-17zM22 29v10l6-2z" fill="#e2f7ff"/><path d="M22 16v13l-6 2z" fill="#d8ecf8"/></svg>
    <div><strong>设计学院</strong><span>自学网www.fke6.com</span></div>
  </div>
</div>
</body>
</html>
```
FILE: styles.css
```css
* { box-sizing: border-box; }

body {
  margin: 0;
  background: #4f86c4;
  color: #16161c;
  font: 12px/16px "Noto Sans", "Noto Sans CJK SC", sans-serif;
}

button {
  margin: 0;
  padding: 0;
  border: 0;
  background: none;
  color: inherit;
  font: inherit;
}

button:disabled { color: #8e9095; }
svg { display: block; flex: none; }
.defs { position: absolute; width: 0; height: 0; }
.ico { width: 16px; height: 16px; overflow: visible; }

.dd {
  width: 0;
  border: 3px solid transparent;
  border-top-color: #3c3c44;
  border-bottom: 0;
}

.window {
  position: relative;
  display: flex;
  flex-direction: column;
  min-height: 100vh;
  padding: 6px;
  border: 2px solid #3d3c50;
  border-radius: 7px;
  background: #efeff8;
}

/* Menu bar */
.menubar {
  display: flex;
  height: 29px;
  background: #abacb0;
  border-bottom: 1px solid #111;
}

.brand {
  display: flex;
  align-items: center;
  gap: 4px;
  width: 131px;
  padding-left: 10px;
  background: #8a8a8a;
  color: #d2d2d2;
}

.brand-name { padding-top: 4px; font: italic 13px/20px "Liberation Sans", sans-serif; }
.brand-name span { font-family: Roboto, sans-serif; }

.menus {
  display: flex;
  flex: 1;
  align-items: center;
  gap: 14px;
  padding-left: 18px;
  white-space: nowrap;
}

.pin { width: 21px; }
.close {
  width: 16px;
  background: linear-gradient(90deg, #a8a9ad, #d5d6da 5px);
}

/* Ribbon */
.ribbon {
  display: flex;
  gap: 5px;
  height: 77px;
  padding: 3px 2px 0 11px;
  border-top: 1px solid #f2f3f5;
  border-bottom: 1px solid #222;
  background: #d7dade;
}

.tools { display: flex; gap: 6px; padding-top: 10px; }

.tool {
  display: flex;
  flex-direction: column;
  align-items: center;
  width: 40px;
  padding: 0 2px;
  line-height: 13px;
}

.tool.two { width: 28px; }
.tool.study { width: 36px; padding: 5px 0 0; gap: 1px; }
.study .dd { margin-top: 12px; }
.vsep { width: 1px; height: 66px; background: #555; }

.list { display: flex; flex-direction: column; }
.list button {
  display: flex;
  align-items: center;
  gap: 7px;
  height: 23px;
  margin-top: -2px;
  margin-bottom: 2px;
  white-space: nowrap;
}
.checks { width: 88px; }
.deviation { width: 78px; }
.draft { width: 90px; }
.more { height: 60px; margin-left: auto; font-size: 18px; color: #555; }

/* Work area */
.workspace { display: flex; flex: 1; }
.document { display: flex; flex: 1; flex-direction: column; min-width: 0; }
.tabrow { display: flex; justify-content: space-between; height: 20px; background: #fff; }
.tabs { display: flex; background: #abacb0; }

.tabs button {
  width: 56px;
  border-right: 2px solid #222;
  border-bottom: 2px solid #222;
  line-height: 16px;
}

.tabs .fit { width: auto; padding: 0 6px; }
.tabs [aria-selected] { border-bottom-color: #d7dade; background: #d7dade; }

.doc-controls {
  display: flex;
  align-items: end;
  gap: 9px;
  padding-right: 10px;
}

.docbody { display: flex; flex: 1; }

.toolbar { display: flex; flex-direction: column; background: #d7dade; }
.features { width: 45px; padding: 7px 2px 0 3px; }
.sketch { width: 47px; padding: 5px 3px 0; border-left: 1px solid #a6a8ac; }

.grip {
  height: 3px;
  margin: 0 1px 5px;
  background: repeating-linear-gradient(90deg, #44444c 0 2px, transparent 2px 4px);
  background-size: 100% 2px;
  background-repeat: no-repeat;
}

.trow { display: flex; align-items: center; gap: 10px; height: 23px; padding-left: 3px; }
.features .trow { gap: 11px; }
.hsep { height: 8px; padding-top: 2px; }
.hsep::before { content: ""; display: block; border-top: 1px solid #777; border-bottom: 1px solid #eee; }
.off .dd { border-top-color: #777; }
.pressed { margin-left: -3px; padding: 3px; border: 1px solid #555; background: #a4a6aa; }
.endline { margin: 7px -2px 0 -3px; border-top: 2px solid #f3f3f5; }
.overflow { margin: auto 0 8px 18px; width: 8px; }

.raised {
  border: 1px solid #858585;
  padding-left: 2px;
  background: linear-gradient(90deg, #e8e9eb 25px, #858585 25px 26px, #e0e1e3 26px);
}

.stage { display: flex; flex: 1; flex-direction: column; min-width: 0; }
.panes { display: flex; flex: 1; }

/* Design tree */
.manager {
  position: relative;
  z-index: 1;
  display: flex;
  flex-direction: column;
  width: 146px;
  padding-top: 8px;
  border-right: 2px solid #111;
  background: linear-gradient(#d7dade 2px, #8a90a8 2px 3px, #d7dade 3px 30px, #e2e5ea 30px);
}

.mtabs { display: flex; height: 22px; }
.mtabs button {
  display: grid;
  place-items: center;
  width: 28px;
  border: 1px solid #222;
  border-width: 2px 2px 2px 0;
  background: #abacb0;
}
.mtabs [aria-selected] { border-bottom-color: #e2e5ea; background: #e2e5ea; }

.filter {
  display: flex;
  align-items: center;
  height: 18px;
  margin: 1px 2px 4px 1px;
  padding-left: 4px;
  border: 1px solid #555;
  background: #f0f0f0;
}

.filter input { flex: 1; min-width: 0; padding: 0 4px; border: 0; outline: 0; background: none; font: inherit; }

.tree { position: relative; overflow: hidden; border-bottom: 2px solid #2a6fc0; }
.tree::before {
  content: "";
  position: absolute;
  top: 18px;
  bottom: 10px;
  left: 10px;
  border-left: 1px dotted #777;
}
.root, .tree li { display: flex; align-items: center; height: 18px; white-space: nowrap; }
.root { gap: 5px; padding-left: 2px; }
.tree ul { position: relative; margin: 0; padding: 0 0 1px 6px; list-style: none; }
.tree li .ico { margin-right: 5px; }
.plus {
  width: 9px;
  height: 9px;
  border: 1px solid #888;
  background:
    linear-gradient(#234 0 0) center / 5px 1px no-repeat,
    linear-gradient(#234 0 0) center / 1px 5px no-repeat,
    #fff;
}
.gap { width: 9px; }
.twig { width: 6px; border-top: 1px dotted #777; }

.scrollbar {
  display: flex;
  align-items: center;
  gap: 8px;
  height: 17px;
  margin-top: auto;
  margin-bottom: 4px;
  padding: 0 4px 0 5px;
  background: #f0f0f0;
}
.tri { border: 4px solid transparent; }
.tri.left { border-left: 0; border-right-color: #444; }
.tri.right { margin-left: auto; border-right: 0; border-left-color: #444; }
.thumb {
  width: 47px;
  height: 15px;
  border: 1px solid #999;
  border-radius: 2px;
  background:
    repeating-linear-gradient(90deg, #777 0 1px, transparent 1px 3px) center / 9px 7px no-repeat,
    linear-gradient(#f6f6f6 50%, #d8d8da 50%);
}

.splitter {
  position: absolute;
  top: 221px;
  right: -9px;
  display: flex;
  flex-direction: column;
  align-items: center;
  justify-content: center;
  gap: 2px;
  width: 9px;
  height: 39px;
  border: 1px solid #222;
  border-left: 0;
  background: #e2e5ea;
}

/* Graphics area */
.viewport { position: relative; flex: 1; min-width: 0; background: #fff; }
.model { position: absolute; inset: 0; width: 100%; height: 100%; }
.axes { font: 10px "Liberation Serif", serif; }

.viewtools {
  position: relative;
  display: flex;
  align-items: center;
  justify-content: center;
  gap: 7px;
  padding: 11px 5px 0 0;
}
.viewtools .dd { width: 7px; border-width: 3px 3px 0; border-top-color: #777; }

.taskpane { position: absolute; top: 39px; right: 0; border: 1px solid #222; border-width: 1px 0 1px 2px; }
.taskpane button {
  display: grid;
  place-items: center;
  width: 22px;
  height: 24px;
  border-bottom: 2px solid #222;
  background: #abacb0;
}
.taskpane button:last-child { height: 23px; border-bottom: 0; }
.taskpane .on { background: #e2e5ea; }

/* Sheet tabs */
.sheets { display: flex; height: 15px; background: #e2e5ea; border-top: 1px solid #111; }
.nav { width: 17px; border: 1px solid #85878c; background: #abacb0; }
.nav svg { height: 12px; width: 100%; }
.sheet { border: 1px solid #222; border-width: 0 2px 1px 0; line-height: 13px; }
.current { width: 46px; background: #e2e5ea; }
.motion { padding: 0 8px 0 6px; background: #abacb0; }

/* Status bar */
.statusbar {
  display: flex;
  align-items: center;
  height: 20px;
  padding-left: 2px;
  border-top: 2px solid #222;
  background: #d7dade;
  white-space: nowrap;
}
.product { width: 388px; }
.mode { width: 113px; }
.units { display: flex; align-items: center; gap: 14px; width: 78px; }
.units, .help, .tag { position: relative; z-index: 3; }
.up { border: 3px solid transparent; border-top: 0; border-bottom-color: #333; }
.help { width: 63px; }

/* Site mark over the lower right corner */
.watermark {
  position: absolute;
  z-index: 2;
  right: 8px;
  bottom: -2px;
  display: flex;
  align-items: end;
  gap: 8px;
  color: #5b5d60;
  pointer-events: none;
}
.watermark div { display: flex; flex-direction: column; }
.watermark strong { font-size: 36px; line-height: 36px; font-weight: 500; }
.watermark div span { color: #77797d; font-size: 16px; line-height: 16px; font-weight: 300; }
```
